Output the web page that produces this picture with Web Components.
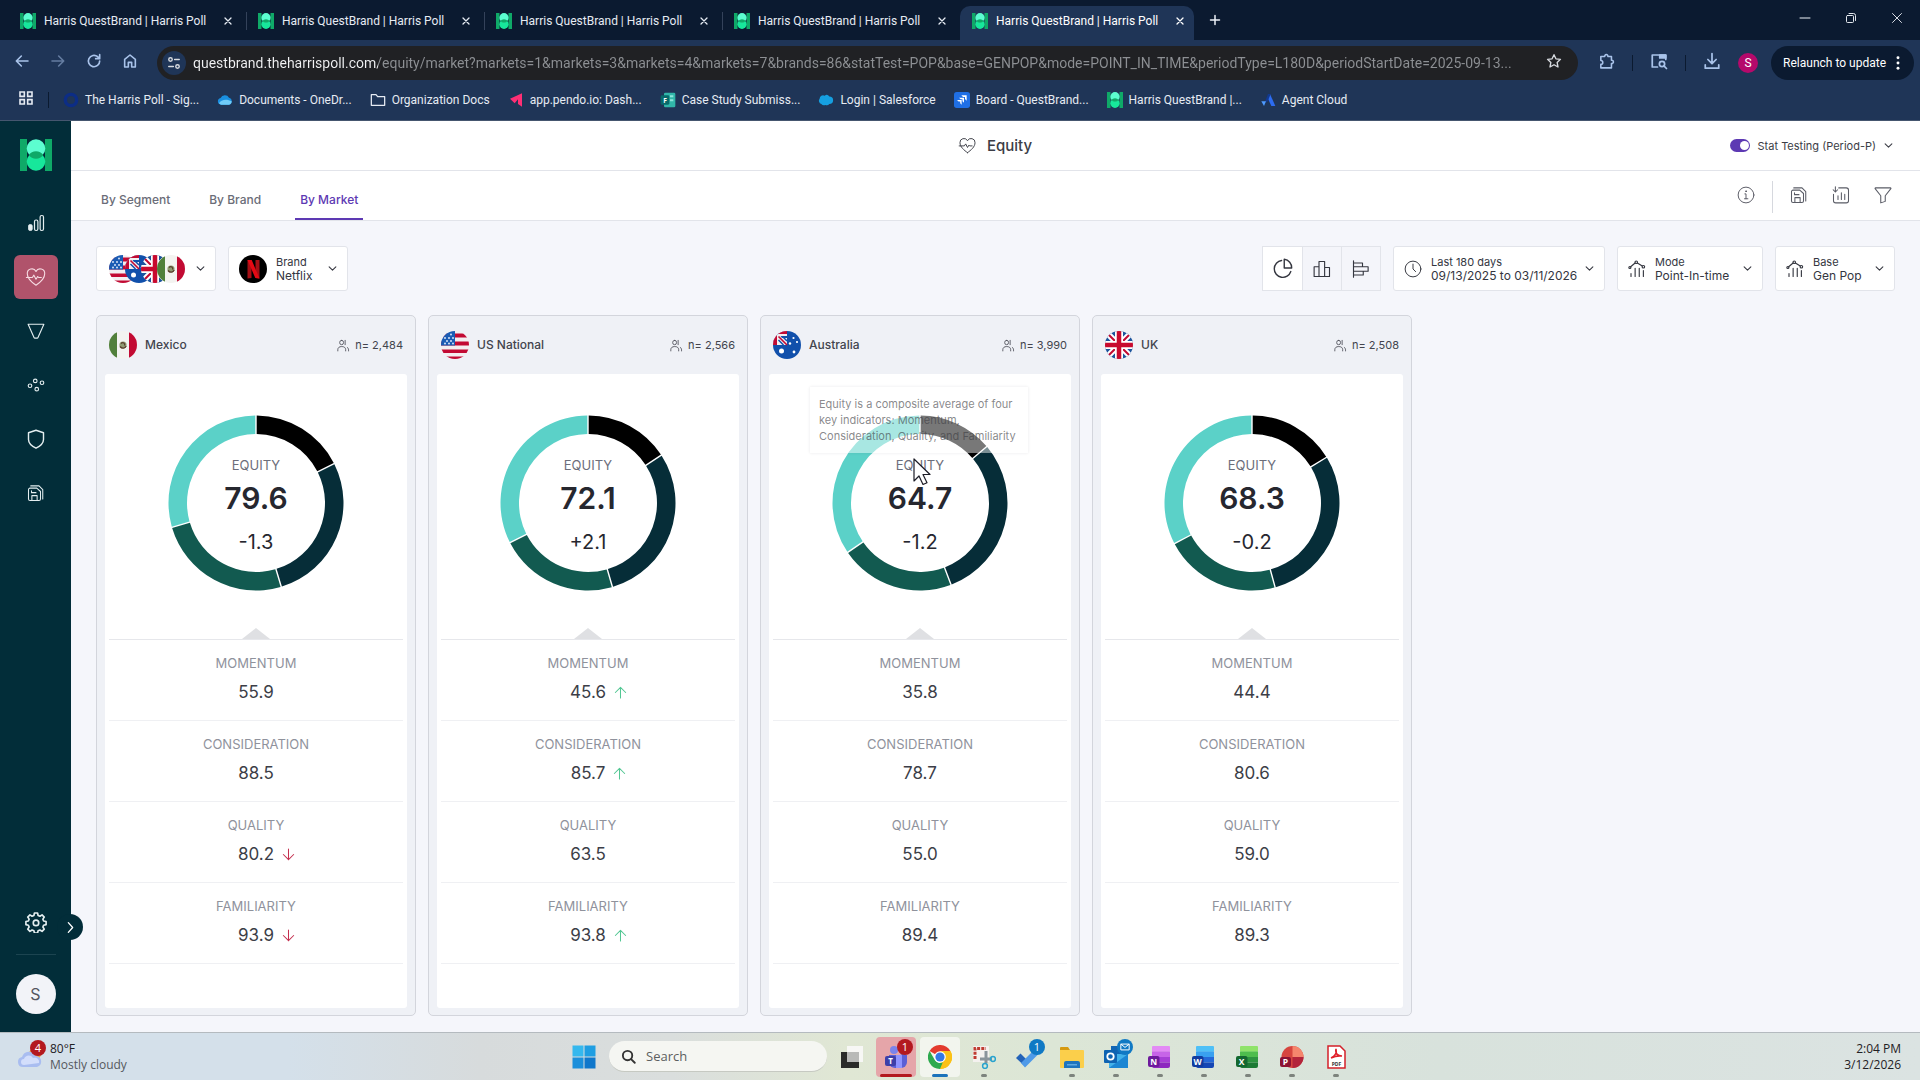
<!DOCTYPE html>
<html lang="en">
<head>
<meta charset="utf-8">
<title>Harris QuestBrand | Harris Poll</title>
<style>
  :root {
    --ui: "Open Sans", "Noto Sans", sans-serif;
    --browser: Roboto, "Noto Sans", sans-serif;
    --app: Inter, "Noto Sans", sans-serif;
    --line: #e2e4ea;
    --ink: #3b3d46;
    --accent: #5d39b3;
    --deep: #022d39;
  }
  html, body { margin: 0; height: 100%; }
  body { font-family: var(--app); }
</style>
</head>
<body>
<desktop-screen></desktop-screen>
<script>
const define = (name, render) => customElements.define(name, class extends HTMLElement {
  connectedCallback() {
    if (this.shadowRoot) return;
    const t = document.createElement('template');
    t.innerHTML = '<style>*,*::before,*::after{box-sizing:border-box}button,input,select{font:inherit;color:inherit;background:none;border:0;margin:0;padding:0;outline:0}a{color:inherit;text-decoration:none}</style>' + render(this);
    this.attachShadow({ mode: 'open' }).append(t.content.cloneNode(true));
  }
});

/* ---------- icons ---------- */
const brandMark = '<path fill="#0fa968" d="M0 0h7v32H0zM25 0h7v32h-7z"/><circle cx="16" cy="22.5" r="9.3" fill="#17e79b"/><circle cx="16" cy="9.5" r="9.3" fill="#5cfdd0"/><path d="M8.6 16a9.3 9.3 0 0 1 14.8 0a9.3 9.3 0 0 1-14.8 0z" fill="#0fa968"/>';
const line = (w, d, extra = '') => `<g fill="none" stroke="currentColor" stroke-width="${w}" stroke-linecap="round" stroke-linejoin="round"><path d="${d}"/>${extra}</g>`;
const heart = 'M12 21C7.500 18 2.500 13.500 2.500 8.500A5 5 0 0 1 12 6A5 5 0 0 1 21.500 8.500C21.500 13.500 16.500 18 12 21z';
const office = (a, b, c, d, letter, tile) => `<rect x="4" y="1" width="18" height="5.700" rx="1" fill="${a}"/><rect x="4" y="6.500" width="18" height="5.600" fill="${b}"/><rect x="4" y="12" width="18" height="5.500" fill="${c}"/><path fill="${d}" d="M4 17.400h18V21a2 2 0 0 1-2 2H6a2 2 0 0 1-2-2z"/><rect x="0" y="11" width="11.500" height="11" rx="2" fill="${tile}"/><text x="5.700" y="19.600" font-family="Open Sans" font-weight="700" font-size="8.500" text-anchor="middle" fill="#fff">${letter}</text>`;
const ICONS = {
  brand: ['0 0 32 32', brandMark],
  close: ['0 0 24 24', line(2.6, 'M6 6l12 12M18 6L6 18')],
  winclose: ['0 0 24 24', line(1.8, 'M3 3l18 18M21 3L3 21')],
  minimize: ['0 0 24 24', line(2, 'M2 12h20')],
  restore: ['0 0 24 24', line(1.9, 'M8 3h9a4 4 0 0 1 4 4v10', '<rect x="3" y="7" width="14" height="14" rx="2"/>')],
  plus: ['0 0 24 24', line(3, 'M12 3v18M3 12h18')],
  back: ['0 0 24 24', line(2.4, 'M21 12H4M11 4.500L3.500 12l7.500 7.500')],
  forward: ['0 0 24 24', line(2.4, 'M3 12h17M13 4.500l7.500 7.500-7.500 7.500')],
  reload: ['0 0 24 24', line(2.5, 'M20.500 12A8.500 8.500 0 1 1 17.500 5.600L20.500 8.500M20.500 2.500v6h-6')],
  home: ['0 0 24 24', line(2.4, 'M4 21V9.500L12 3l8 6.500V21h-5.500v-7h-5v7z')],
  site: ['0 0 24 24', line(2.4, 'M13 6h8M3 18h8', '<circle cx="6" cy="6" r="3"/><circle cx="18" cy="18" r="3"/>')],
  star: ['0 0 24 24', line(2, 'M12 2.500l2.900 6.200 6.800.8-5 4.700 1.300 6.800-6-3.400-6 3.400 1.300-6.800-5-4.700 6.800-.8z')],
  puzzle: ['0 0 24 24', line(2.2, 'M4 5h5.500a2.300 2.300 0 1 1 4.500 0H19v5.300a2.300 2.300 0 1 1 0 4.500V21H4v-5a2.600 2.600 0 0 0 0-5.500z')],
  tabsearch: ['0 0 24 24', line(2.3, 'M10 20H3V4h18v6M18.500 18.500l3.500 3.500', '<circle cx="16" cy="16" r="3.500"/><path d="M13 4h8v4h-8z" fill="currentColor"/>')],
  download: ['0 0 24 24', line(2.3, 'M12 2v13M6.500 10l5.500 5.500 5.500-5.500M3 17v4.500h18V17')],
  dots: ['0 0 24 24', '<g fill="currentColor"><circle cx="12" cy="4" r="2.200"/><circle cx="12" cy="12" r="2.200"/><circle cx="12" cy="20" r="2.200"/></g>'],
  apps: ['0 0 24 24', '<g fill="none" stroke="currentColor" stroke-width="2.400"><path d="M3 3h6.500v6.500H3zM14.500 3H21v6.500h-6.500zM3 14.500h6.500V21H3zM14.500 14.500H21V21h-6.500z"/></g>'],
  ring: ['0 0 24 24', '<circle cx="12" cy="12" r="8.500" fill="none" stroke="#0c2d86" stroke-width="5"/>'],
  cloud: ['0 0 24 24', '<path fill="#1a8fe0" d="M6 19a5 5 0 0 1-.6-9.900A7 7 0 0 1 18 8.500 5.400 5.400 0 0 1 18 19z"/><path fill="#6fcbf7" d="M3 17c3-6 12-7 19-3a5 5 0 0 1-4 5H6a5 5 0 0 1-3-2z"/>'],
  folder: ['0 0 24 24', line(1.9, 'M2 4h7l2.500 3H22v13H2z')],
  pendo: ['0 0 24 24', '<path fill="#ff2f75" d="M3 10L21 2v20l-6-4V11l-5 6z"/>'],
  forms: ['0 0 24 24', '<rect x="6" y="1" width="17" height="22" rx="2" fill="#31b6a9"/><path fill="#8ce5da" d="M15 5h5v3h-5zM15 11h5v3h-5z"/><rect x="1" y="5" width="13" height="14" rx="2" fill="#07696b"/><text x="7.500" y="16" font-family="Open Sans" font-weight="700" font-size="10" text-anchor="middle" fill="#fff">F</text>'],
  salesforce: ['0 0 24 24', '<path fill="#159fe0" d="M5 18a5 5 0 0 1-2.500-8A5 5 0 0 1 10 5.500a5 5 0 0 1 7 1.200A5.600 5.600 0 1 1 17 18a5 5 0 0 1-6 1.500A5 5 0 0 1 5 18z"/>'],
  jira: ['0 0 24 24', '<rect width="24" height="24" rx="4" fill="#1f6fe5"/><path fill="#fff" d="M11 5h8v8l-2.500-2.500V7.500h-3zM7.500 8.500h7.500V16l-2.300-2.300V11H10zM4.500 12h7v7l-2.200-2.300V14.300H6.800z"/>'],
  agent: ['0 0 24 24', '<path fill="#2d6cf0" d="M15 3l8 18h-6l-5-11z"/><path fill="#12398f" d="M12 3h4l-5 12-4 1z"/><path fill="#4f9bff" d="M2 14h7l-3 7z"/>'],
  bars: ['0 0 24 24', '<rect x="2" y="14" width="5" height="8" rx="2" fill="currentColor" stroke="currentColor"/>' + line(1.6, '', '<rect x="10" y="8" width="4.500" height="14" rx="2"/><rect x="17.500" y="2" width="4.500" height="20" rx="2"/>')],
  heart: ['0 0 24 24', line(1.2, heart, '<path d="M1.500 12.500H8l1.700-2.500 2.300 4.500 1.800-3 1 1h3"/>')],
  cone: ['0 0 24 24', line(1.5, 'M1.500 3h21L14.500 21a1 1 0 0 1-1 .5h-3a1 1 0 0 1-1-.5z')],
  nodes: ['0 0 24 24', line(1.5, '', '<circle cx="4" cy="13" r="2.400"/><circle cx="11" cy="6.500" r="2.400"/><circle cx="20" cy="9" r="2.400"/><circle cx="13" cy="17.500" r="2.400"/>')],
  shield: ['0 0 24 24', line(1.7, 'M12 1.500l9 3v8c0 5-4 8-9 10.500-5-2.500-9-5.500-9-10.500v-8z')],
  save: ['0 0 24 24', line(1.4, 'M4 5.500h9l5 4.500V20a2 2 0 0 1-2 2H4a2 2 0 0 1-2-2V7.500a2 2 0 0 1 2-2zM6.500 22v-6.500h7V22M6 9v2.500h6', '<path d="M5 2.500h11l5 5V20"/>')],
  cog: ['0 0 24 24', line(1.8, 'M10.300 2.200h3.400l.6 2.700 2 .8 2.300-1.500 2.400 2.400-1.500 2.300.8 2 2.700.6v3.400l-2.700.6-.8 2 1.500 2.300-2.400 2.400-2.300-1.500-2 .8-.6 2.700h-3.400l-.6-2.700-2-.8-2.300 1.500-2.400-2.400 1.500-2.300-.8-2-2.700-.6v-3.400l2.700-.6.8-2L3 6.600l2.400-2.400 2.300 1.500 2-.8z', '<circle cx="12" cy="13" r="3"/>')],
  right: ['0 0 24 24', line(2.4, 'M8 3l8 9-8 9')],
  chev: ['0 0 24 24', line(2.8, 'M3 7.500l9 9 9-9')],
  info: ['0 0 24 24', line(1.3, 'M10.500 10.500H12V17M10 17h4.500', '<circle cx="12" cy="12" r="10.500"/><circle cx="12" cy="7" r=".6" fill="currentColor"/>')],
  report: ['0 0 24 24', line(1.4, 'M9 2.500h10a3 3 0 0 1 3 3v14a3 3 0 0 1-3 3H5a3 3 0 0 1-3-3V11M4.500 1v7M1.500 5l3 3 3-3M8 18v-5M12.500 18V9M17 18v-7')],
  filter: ['0 0 24 24', line(1.4, 'M2 2.500h20c.5 0 .8.600.5 1L15 13v7.500l-6 2V13L1.500 3.500c-.3-.4 0-1 .5-1z')],
  pie: ['0 0 24 24', line(1.6, 'M11 2.800A9.700 9.700 0 1 0 21.500 15.500M14 1.500V11.500h8.500A9.500 9.500 0 0 0 14 1.500z')],
  columns: ['0 0 24 24', line(1.5, 'M1.500 22V9H8v13zM8 22V2h7.500V22zM15.500 22V10H22v12z')],
  rows: ['0 0 24 24', line(1.5, 'M2 1v22M2 4h12v5H2M2 9h19.500v6H2M2 15h13v5H2')],
  clock: ['0 0 24 24', line(1.3, 'M12 5.500V12l3.500 3.500', '<circle cx="12" cy="12" r="10.500"/>')],
  trend: ['0 0 24 24', line(1.5, 'M3.500 9L9.500 4M12.500 4l6.500 4M4 22v-4M9.500 22V11M15 22V11M20.500 22v-8', '<circle cx="2.500" cy="10" r="1.400"/><circle cx="11" cy="3" r="1.700"/><circle cx="20.500" cy="9" r="1.700"/>')],
  people: ['0 0 24 24', line(1.5, 'M1.500 22v-2.500c0-3.500 3-5.500 6.500-5.500h1.500c3.500 0 6.500 2 6.500 5.500V22M15 2.500v8M19 15.500c1.500 1 2.300 2.500 2.300 5V22', '<rect x="5" y="2.500" width="7" height="8" rx="3.500"/>')],
  up: ['0 0 24 24', line(1.9, 'M12 22V2.500M2.500 12L12 2.500l9.500 9.500')],
  down: ['0 0 24 24', line(1.9, 'M12 2v19.500M2.500 12l9.500 9.500 9.500-9.500')],
  netflix: ['0 0 28 28', '<rect width="28" height="28" fill="#000"/><path fill="#a50f15" d="M8.500 5h4v18l-4 .6zM16.500 5h4v18.500l-4-.6z"/><path fill="#e50914" d="M8.500 5h4.200l7.800 18.500-4.200-.6z"/>'],
  weather: ['0 0 26 26', '<circle cx="18" cy="10" r="6" fill="#f0a23c"/><path fill="#a9bdf0" d="M6 23a5 5 0 0 1-1-9.900A7.500 7.500 0 0 1 19 12a5.600 5.600 0 0 1 1 11z"/><path fill="#d3defb" d="M7 21a3 3 0 0 1 0-6c1-4 7-5 9-1 3-1 7 1 6 5z"/>'],
  windows: ['0 0 24 24', '<path fill="#35b8ee" d="M.5.500h11v11H.5z"/><path fill="#1f9ee2" d="M12.500.500h11v11h-11z"/><path fill="#1b8fdb" d="M.5 12.500h11v11H.5z"/><path fill="#0f77cb" d="M12.500 12.500h11v11h-11z"/>'],
  search: ['0 0 24 24', line(3, 'M16.500 16.500L22 22', '<circle cx="10.500" cy="10.500" r="7.500"/>')],
  taskview: ['0 0 24 24', '<path fill="#2a2b29" d="M1 7h18v16H1z"/><path fill="#f7f7f5" d="M7 1h16v16H7z"/><path fill="#b9bab8" d="M7 7h12v10H7z"/>'],
  teams: ['0 0 24 24', '<circle cx="10" cy="5" r="4" fill="#7b83eb"/><circle cx="19" cy="7" r="3" fill="#5059c9"/><path fill="#5b5fd6" d="M5 10h18v7a6 6 0 0 1-6 6h-6a6 6 0 0 1-6-6z"/><path fill="#8f94ff" d="M12 10h6v13h-6z"/><rect x="1" y="11" width="11" height="10" rx="2" fill="#3d3fa8"/><text x="6.500" y="19" font-family="Open Sans" font-weight="700" font-size="8" text-anchor="middle" fill="#fff">T</text>'],
  chrome: ['0 0 24 24', '<path fill="#e33b2e" d="M12 12L1.600 6a12 12 0 0 1 20.800 0z"/><path fill="#fbc116" d="M12 12l10.400-6A12 12 0 0 1 12 24z"/><path fill="#fbc116" d="M12 6h10.400A12 12 0 0 1 12 24l5.200-9z"/><path fill="#2da94f" d="M1.600 6l5.200 9a6 6 0 0 0 8 2.300L12 24A12 12 0 0 1 1.600 6z"/><circle cx="12" cy="12" r="5.800" fill="#fff"/><circle cx="12" cy="12" r="4.600" fill="#3478e5"/>'],
  snip: ['0 0 24 24', '<path fill="#f4f1ef" d="M1 1h16v16H1z"/><path fill="none" stroke="#bf3b31" stroke-width="3" stroke-dasharray="3 1.200" d="M3 14V3.500h11"/><path fill="none" stroke="#8a949b" stroke-width="3" d="M14 6v12M8 14h12"/><circle cx="21" cy="14" r="2.400" fill="none" stroke="#28a3cf" stroke-width="1.500"/><circle cx="13" cy="21" r="2.400" fill="none" stroke="#28a3cf" stroke-width="1.500"/>'],
  todo: ['0 0 24 24', '<path fill="#2363b8" d="M0 13l4.500-4.500L13 17l-4 4.500z"/><path fill="#4f9ae8" d="M9 22.500l-4-4.500L19 4l4.500 4z"/>'],
  explorer: ['0 0 24 24', '<path fill="#d69a10" d="M0 3a1 1 0 0 1 1-1h7l2 3H0z"/><path fill="#fbcf4b" d="M0 5h23a1 1 0 0 1 1 1v16a1 1 0 0 1-1 1H1a1 1 0 0 1-1-1z"/><path fill="#1f74bd" d="M4 23v-5a2 2 0 0 1 2-2h12a2 2 0 0 1 2 2v5z"/><path fill="#5fa9e0" d="M7 19h10v1.500H7z"/>'],
  outlook: ['0 0 24 24', '<path fill="#1266b5" d="M7 1h15v11H7z"/><path fill="#41b1ea" d="M5 9h19v14H5z"/><path fill="#1b86d3" d="M5 23L24 9v14z"/><rect y="5" width="13" height="13" rx="1" fill="#0e63b2"/><circle cx="6.500" cy="11.500" r="3.200" fill="none" stroke="#fff" stroke-width="1.800"/>'],
  onenote: ['0 0 24 24', office('#e38bf5', '#c764e8', '#a73fd6', '#8d28bf', 'N', '#6d1a9c')],
  word: ['0 0 24 24', office('#4fc0f7', '#39a0f0', '#2568d8', '#1546b4', 'W', '#123b9e')],
  excel: ['0 0 24 24', office('#8fe36a', '#4ebd4d', '#2d9440', '#1d7a35', 'X', '#13672f')],
  ppt: ['0 0 24 24', '<circle cx="12.500" cy="12" r="11" fill="#d6453f"/><path fill="#f5866d" d="M12.500 1a11 11 0 0 1 11 11h-11z"/><path fill="#b3243b" d="M23.500 12a11 11 0 0 1-11 11V12z"/><rect x="0" y="12" width="11" height="10" rx="2" fill="#8c1233"/><text x="5.500" y="19.800" font-family="Open Sans" font-weight="700" font-size="8.500" text-anchor="middle" fill="#fff">P</text>'],
  pdf: ['0 0 24 24', '<path fill="#fff" stroke="#d3202a" stroke-width="1.500" d="M4 1h12l5 5v17H4z"/><path fill="none" stroke="#e0202a" stroke-width="1.600" d="M7 13c4-2 6-5 5-9-1 5 2 7 6 7-4-.5-8 .5-11 2z"/><text x="12.500" y="20.500" font-family="Open Sans" font-weight="700" font-size="5" text-anchor="middle" fill="#333">PDF</text>'],
  mail: ['0 0 24 24', '<path fill="none" stroke="#fff" stroke-width="2.400" d="M2 5h20v14H2zM2 5l10 8L22 5"/>'],
  pointer: ['0 0 18 28', '<path fill="#fff" stroke="#1c1c26" stroke-width="1.200" stroke-linejoin="round" d="M1 1v22l5-5 4 8.500 4-1.800-4-8.200h7z"/>'],
  flagMX: ['0 0 28 28', '<rect width="28" height="28" fill="#f3f3f0"/><path fill="#51803b" d="M0 0h8v28H0z"/><path fill="#c20a33" d="M20 0h8v28h-8z"/><circle cx="14" cy="14" r="3.600" fill="#8f9a72"/><path fill="none" stroke="#5b3f2d" stroke-width="1.300" d="M12 12.500c2-2 4.500 0 3.500 2M11 15.500c2 2.500 5 2 6.200-.5"/>'],
  flagUS: ['0 0 28 28', '<rect width="28" height="28" fill="#f3eef0"/><path fill="#c20a33" d="M0 2.500h28v4H0zM0 10.500h28v4H0zM0 18.500h28v3.500H0zM0 25.500h28V28H0z"/><path fill="#1b5cb4" d="M0 0h14v14.500H0z"/><g fill="#d4e2f7"><circle cx="4" cy="7" r="1"/><circle cx="8" cy="7" r="1"/><circle cx="12" cy="7" r="1"/><circle cx="6" cy="10" r="1"/><circle cx="10" cy="10" r="1"/><circle cx="4" cy="12.500" r="1"/><circle cx="8" cy="12.500" r="1"/><circle cx="12" cy="12.500" r="1"/><circle cx="10" cy="3.500" r="1"/></g>'],
  flagAU: ['0 0 28 28', '<rect width="28" height="28" fill="#1150ab"/><path fill="#f3eef0" d="M0 0h14v14H0z"/><path fill="#c20a33" d="M0 0h14v3H4v11H0z"/><path fill="#1150ab" d="M7.500 5H14v2H9z"/><path d="M5.500 5.500L14 14" stroke="#c20a33" stroke-width="1.600"/><path d="M10 6l4 4M5.500 9l5 5" stroke="#1150ab" stroke-width="1.500"/><g fill="#fff"><circle cx="8.500" cy="20" r="2.500"/><circle cx="20.500" cy="7" r="1.100"/><circle cx="17" cy="12.500" r="1.200"/><circle cx="24" cy="11" r="1.100"/><circle cx="21" cy="21" r="1.400"/></g>'],
  flagUK: ['0 0 28 28', '<rect width="28" height="28" fill="#1d559c"/><path d="M0 0l28 28M28 0L0 28" stroke="#fff" stroke-width="6"/><path d="M0 0l28 28M28 0L0 28" stroke="#c20a33" stroke-width="2"/><path d="M14 0v28M0 14h28" stroke="#fff" stroke-width="8"/><path d="M14 0v28M0 14h28" stroke="#c80a2e" stroke-width="4.500"/>'],
};
define('ui-icon', el => {
  const [box, body] = ICONS[el.getAttribute('name')];
  const w = el.getAttribute('size') || 16, h = el.getAttribute('tall') || w;
  return `<style>:host{display:inline-flex;flex:none}svg{display:block;${el.hasAttribute('round') ? 'border-radius:50%' : ''}}</style><svg width="${w}" height="${h}" viewBox="${box}" preserveAspectRatio="none" aria-hidden="true">${body}</svg>`;
});

/* ---------- browser window ---------- */
define('browser-tab', el => `<style>
  :host{display:flex;align-items:center;width:238px;height:34px;padding:0 0 4px 20px;position:relative;color:#e6ebf3}
  :host([active]){background:#1f3557;border-radius:10px 10px 0 0;padding-left:12px;width:234px;margin-left:8px;color:#fff}
  :host([rule])::after{content:"";position:absolute;right:-9px;top:6px;width:1px;height:18px;background:#34425a}
  .t{flex:none;width:188px;text-align:left;display:flex;align-items:center;gap:8px;white-space:nowrap;overflow:hidden}
  .x{margin-left:10px;width:20px;height:20px;display:grid;place-items:center}
</style><button class="t"><ui-icon name="brand" size="16"></ui-icon><slot></slot></button><button class="x" aria-label="Close tab"><ui-icon name="close" size="12"></ui-icon></button>`);

define('browser-chrome', () => `<style>
  :host{display:block;flex:none;font:12px/16px var(--browser);color:#eef2f8}
  .strip{display:flex;align-items:flex-end;height:40px;background:#0b1a30}
  .new{margin:0 auto 7px 12px;width:18px;height:26px;display:grid;place-items:center}
  .win{display:flex;height:40px;align-items:center;padding:0 17px 0 0;gap:34px}
  .bar{display:flex;align-items:center;height:40px;background:#1f3557;color:#a9c3ea;padding:6px 6px 0 14px}
  .nav{display:flex;gap:20px;width:143px;flex:none}.dim{opacity:.5}
  .url{flex:1;min-width:0;display:flex;align-items:center;height:34px;border-radius:17px;background:#202124;padding:0 16px 0 5px;color:#d8dbe0}
  .site{width:24px;height:24px;border-radius:50%;background:#1f3557;display:grid;place-items:center;flex:none}
  .url input{flex:1;min-width:0;margin:0 12px 0 7px;font-size:14px;line-height:20px;color:#8d9094;-webkit-text-fill-color:transparent;background:linear-gradient(90deg,#f2f3f5 185px,#8d9094 185px);-webkit-background-clip:text;background-clip:text}
  .tools{display:flex;align-items:center;gap:17px;padding:0 13px 0 20px}
  .tools i{width:1px;height:16px;background:#0b1a30}
  .me{width:20px;height:20px;border-radius:50%;background:#b5096b;color:#fff;display:grid;place-items:center}
  .re{height:34px;border-radius:17px;background:#0b1a30;color:#fff;padding:0 8px 0 12px;display:flex;align-items:center;gap:4px;white-space:nowrap}
  .marks{display:flex;align-items:center;height:40px;background:#1f3557;padding:0 16px 0 18px;color:#e6ebf3}
  .marks>i{width:1px;height:16px;background:#0b1a30;margin:0 14px}
  nav{display:flex;gap:18px}
  nav a{display:flex;align-items:center;gap:6px;white-space:nowrap}
  .edge{height:1px;background:#45566f}
</style>
<div class="strip">
 <browser-tab rule>Harris QuestBrand | Harris Poll</browser-tab><browser-tab rule>Harris QuestBrand | Harris Poll</browser-tab><browser-tab rule>Harris QuestBrand | Harris Poll</browser-tab><browser-tab>Harris QuestBrand | Harris Poll</browser-tab><browser-tab active>Harris QuestBrand | Harris Poll</browser-tab>
 <button class="new" aria-label="New tab"><ui-icon name="plus" size="12"></ui-icon></button>
 <div class="win"><button aria-label="Minimize"><ui-icon name="minimize" size="12"></ui-icon></button><button aria-label="Restore"><ui-icon name="restore" size="12"></ui-icon></button><button aria-label="Close"><ui-icon name="winclose" size="12"></ui-icon></button></div>
</div>
<div class="bar">
 <div class="nav"><button aria-label="Back"><ui-icon name="back"></ui-icon></button><button class="dim" aria-label="Forward"><ui-icon name="forward"></ui-icon></button><button aria-label="Reload"><ui-icon name="reload"></ui-icon></button><button aria-label="Home"><ui-icon name="home"></ui-icon></button></div>
 <div class="url"><button class="site" aria-label="Site information"><ui-icon name="site" size="14"></ui-icon></button><input aria-label="Address" value="questbrand.theharrispoll.com/equity/market?markets=1&amp;markets=3&amp;markets=4&amp;markets=7&amp;brands=86&amp;statTest=POP&amp;base=GENPOP&amp;mode=POINT_IN_TIME&amp;periodType=L180D&amp;periodStartDate=2025-09-13..."><button aria-label="Bookmark"><ui-icon name="star"></ui-icon></button></div>
 <div class="tools"><button aria-label="Extensions"><ui-icon name="puzzle" size="17"></ui-icon></button><i></i><button aria-label="Search tabs"><ui-icon name="tabsearch" size="18"></ui-icon></button><i></i><button aria-label="Downloads"><ui-icon name="download" size="18"></ui-icon></button><button class="me">S</button></div>
 <button class="re">Relaunch to update<ui-icon name="dots" size="16"></ui-icon></button>
</div>
<div class="marks"><button aria-label="Apps"><ui-icon name="apps"></ui-icon></button><i></i><nav>${
 [['ring','The Harris Poll - Sig...'],['cloud','Documents - OneDr...'],['folder','Organization Docs'],['pendo','app.pendo.io: Dash...'],['forms','Case Study Submiss...'],['salesforce','Login | Salesforce'],['jira','Board - QuestBrand...'],['brand','Harris QuestBrand |...'],['agent','Agent Cloud']].map(([i,t]) => `<a href="#"><ui-icon name="${i}"></ui-icon>${t}</a>`).join('')}</nav></div>
<div class="edge"></div>`);

/* ---------- application ---------- */
define('side-bar', () => `<style>
  :host{display:flex;flex-direction:column;align-items:center;flex:none;width:71px;background:var(--deep);color:#e4eef0;padding:18px 0;position:relative}
  nav{display:flex;flex-direction:column;gap:10px;margin-top:30px}
  a{width:44px;height:44px;border-radius:6px;display:grid;place-items:center}
  a.on{background:#b0536b;color:#f6dbe2}
  .set{margin-top:auto}
  hr{width:40px;height:1px;border:0;background:#1c4450;margin:10px 0 19px}
  .me{width:40px;height:40px;border-radius:50%;background:#f2f3f8;color:#55565e;font:16px/40px var(--app)}
  .open{position:absolute;right:-12px;bottom:92px;width:26px;height:26px;border-radius:50%;background:var(--deep);display:grid;place-items:center;z-index:2;color:#fff}
</style>
<ui-icon name="brand" size="32"></ui-icon>
<nav aria-label="Main">${[['bars','Overview',18],['heart','Equity',22],['cone','Funnel',18],['nodes','Attributes',18],['shield','Shield',20],['save','Saved',18]].map(([i,l,s]) => `<a href="#" aria-label="${l}" class="${i==='heart'?'on':''}"><ui-icon name="${i}" size="${s}"></ui-icon></a>`).join('')}</nav>
<a class="set" href="#" aria-label="Settings"><ui-icon name="cog" size="22"></ui-icon></a><hr><button class="me">S</button>
<button class="open" aria-label="Expand menu"><ui-icon name="right" size="13"></ui-icon></button>`);

define('page-header', () => `<style>
  :host{display:block;background:#fff;color:var(--ink)}
  .top{display:grid;grid-template-columns:1fr auto 1fr;align-items:center;height:50px;border-bottom:1px solid var(--line);padding:0 27px 0 26px}
  h1{display:flex;align-items:center;gap:10px;margin:0;font:500 15px/20px var(--app)}
  .stat{justify-self:end;display:flex;align-items:center;gap:8px;font-size:11px;line-height:16px;white-space:nowrap}
  .stat input{appearance:none;width:20px;height:13px;border-radius:7px;background:var(--accent);position:relative}
  .stat input::after{content:"";position:absolute;right:1px;top:2px;width:9px;height:9px;border-radius:50%;background:#fff}
  .stat label,.stat button{display:flex;align-items:center;gap:8px}
  .sub{display:flex;justify-content:space-between;height:50px;border-bottom:1px solid var(--line);padding:0 28px 0 25px}
  nav{display:flex;gap:29px}
  nav a{padding:20px 5px 0;font-size:12px;line-height:18px;font-weight:500;color:#6b6d78;white-space:nowrap}
  nav a.on{color:var(--accent);border-bottom:2px solid var(--accent)}
  .acts{display:flex;align-items:center;gap:24px;color:#5a5c66;padding-top:2px}
  .acts i{width:1px;height:32px;background:#d6d8de;margin:0 -7px}
</style>
<div class="top"><span></span><h1><ui-icon name="heart" size="19"></ui-icon>Equity</h1>
<div class="stat"><label><input type="checkbox" checked>Stat Testing (Period-P)</label><button aria-label="Stat testing options"><ui-icon name="chev" size="9"></ui-icon></button></div></div>
<div class="sub"><nav><a href="#">By Segment</a><a href="#">By Brand</a><a href="#" class="on">By Market</a></nav>
<div class="acts"><button aria-label="Information"><ui-icon name="info" size="18"></ui-icon></button><i></i><button aria-label="Save"><ui-icon name="save" size="18"></ui-icon></button><button aria-label="Export"><ui-icon name="report" size="18"></ui-icon></button><button aria-label="Filter"><ui-icon name="filter" size="18"></ui-icon></button></div></div>`);

define('pick-list', el => `<style>
  :host{display:block;color:#34363f}
  label{display:flex;align-items:center;justify-content:space-between;height:45px;padding:0 10px;background:#fff;border:1px solid var(--line);border-radius:3px;font-size:12px;line-height:14px}
  .c{display:flex;flex-direction:column;margin:0 auto 0 9px}
  .k{font-size:11px}
  select{appearance:none;height:14px;line-height:14px;white-space:nowrap}
</style><label><ui-icon name="${el.getAttribute('icon')}" size="${el.getAttribute('size') || 18}" ${el.hasAttribute('round') ? 'round' : ''}></ui-icon><span class="c"><span class="k">${el.getAttribute('label')}</span><select><option>${el.getAttribute('value')}</option></select></span><ui-icon name="chev" size="9"></ui-icon></label>`);

define('filter-bar', () => `<style>
  :host{display:flex;gap:12px;align-items:flex-start;color:#34363f}
  .mk{display:flex;align-items:center;justify-content:space-between;width:120px;height:45px;padding:0 10px 0 12px;background:#fff;border:1px solid var(--line);border-radius:3px}
  .fl{display:flex}.fl ui-icon+ui-icon{margin-left:-12px}
  .view{display:flex;margin-left:auto;border:1px solid var(--line)}
  .view button{width:39px;height:43px;display:grid;place-items:center;border-left:1px solid var(--line);background:#f4f5fa}
  .view button:first-child{background:#fff;border-left:0}
  .br{width:120px}.dt{width:212px}.mo{width:146px}.ba{width:120px}
</style>
<button class="mk" aria-label="Markets"><span class="fl"><ui-icon name="flagUS" size="28" round></ui-icon><ui-icon name="flagAU" size="28" round></ui-icon><ui-icon name="flagUK" size="28" round></ui-icon><ui-icon name="flagMX" size="28" round></ui-icon></span><ui-icon name="chev" size="9"></ui-icon></button>
<pick-list class="br" icon="netflix" size="28" round label="Brand" value="Netflix"></pick-list>
<div class="view"><button aria-label="Donut view"><ui-icon name="pie" size="21"></ui-icon></button><button aria-label="Column view"><ui-icon name="columns" size="18"></ui-icon></button><button aria-label="Row view"><ui-icon name="rows" size="18"></ui-icon></button></div>
<pick-list class="dt" icon="clock" label="Last 180 days" value="09/13/2025 to 03/11/2026"></pick-list>
<pick-list class="mo" icon="trend" label="Mode" value="Point-In-time"></pick-list>
<pick-list class="ba" icon="trend" label="Base" value="Gen Pop"></pick-list>`);

define('equity-donut', el => {
  const vals = el.getAttribute('values').split(',').map(Number);
  const sum = vals.reduce((a, b) => a + b), cols = ['#000', '#062d38', '#125a50', '#5bd1c8'];
  const at = (r, a) => `${(88 + r * Math.sin(a)).toFixed(2)} ${(88 - r * Math.cos(a)).toFixed(2)}`;
  let a = 0;
  const arcs = vals.map((v, i) => {
    const b = a + v / sum * 2 * Math.PI, go = .008, gi = .010;
    const d = `M${at(87.5, a + go)}A87.500 87.500 0 0 1 ${at(87.5, b - go)}L${at(69, b - gi)}A69 69 0 0 0 ${at(69, a + gi)}z`;
    a = b;
    return `<path fill="${cols[i]}" d="${d}"/>`;
  }).join('');
  return `<style>
  :host{display:grid;width:176px;height:176px}
  svg,div{grid-area:1/1}
  div{display:flex;flex-direction:column;align-items:center;padding-top:41px;color:#26272f}
  .k{font-size:13px;line-height:18px;color:#6c6e7b}
  .v{font-size:30px;line-height:40px;font-weight:600;margin-top:4px}
  .d{font-size:20px;line-height:28px;margin-top:10px}
</style><svg width="176" height="176" aria-hidden="true">${arcs}</svg><div><span class="k">EQUITY</span><span class="v">${el.getAttribute('score')}</span><span class="d">${el.getAttribute('delta')}</span></div>`;
});

define('metric-row', el => {
  const t = el.getAttribute('trend');
  return `<style>
  :host{display:block;height:81px;padding-top:15px;margin:0 4px;border-bottom:1px solid #eff0f3;text-align:center}
  .k{font-size:13px;line-height:16px;color:#8f929c}
  .r{display:grid;grid-template-columns:1fr auto 1fr;align-items:center;gap:8px;margin-top:10px;font-size:17px;line-height:22px;color:#3c3e47}
  ui-icon{color:${t === 'up' ? '#52c793' : '#c4304f'}}
</style><div class="k">${el.getAttribute('label')}</div><div class="r"><span></span><span>${el.getAttribute('value')}</span>${t ? `<ui-icon name="${t}" size="13"></ui-icon>` : '<span></span>'}</div>`;
});

define('market-card', el => {
  const g = n => el.getAttribute(n), vals = g('values').split(','), tr = (g('trends') || ',,,').split(',');
  return `<style>
  :host{display:flex;flex-direction:column;flex:0 1 320px;border:1px solid #d3d5dc;border-radius:5px;background:#eff1f6;padding:0 8px 7px}
  header{display:flex;align-items:center;height:58px;padding:0 4px;color:#42444d;white-space:nowrap}
  h2{margin:0 auto 0 8px;font:500 12px/20px var(--app)}
  .n{margin-left:5px;font-size:11px;line-height:16px}
  .body{flex:1;background:#fff;border-radius:3px;position:relative}
  .hero{height:266px;padding-top:41px;display:flex;flex-direction:column;align-items:center;justify-content:space-between;border-bottom:1px solid #e6e7eb;margin:0 4px}
  .tri{width:28px;height:11px;background:#dfe0e3;clip-path:polygon(50% 0,100% 100%,0 100%)}
</style><header><ui-icon name="${g('flag')}" size="28" round></ui-icon><h2>${g('name')}</h2><ui-icon name="people" size="13"></ui-icon><span class="n">n= ${g('count')}</span></header>
<div class="body"><div class="hero"><equity-donut score="${g('score')}" delta="${g('delta')}" values="${g('values')}"></equity-donut><span class="tri"></span></div>
${['MOMENTUM','CONSIDERATION','QUALITY','FAMILIARITY'].map((l, i) => `<metric-row label="${l}" value="${vals[i]}" trend="${tr[i]}"></metric-row>`).join('')}<slot></slot></div>`;
});

define('hint-bubble', () => `<style>
  :host{position:absolute;left:41px;top:13px;width:218px;padding:9px 9px;background:rgba(255,255,255,.47);box-shadow:0 0 3px rgba(40,40,60,.1);font-size:11px;line-height:16px;color:rgba(60,60,66,.62);white-space:nowrap}
</style><slot></slot>`);
define('mouse-pointer', () => `<style>:host{position:absolute;left:144px;top:84px}</style><ui-icon name="pointer" size="18" tall="28"></ui-icon>`);

define('equity-app', () => `<style>
  :host{display:flex;flex:1;min-height:0}
  main{flex:1;min-width:0;display:flex;flex-direction:column;background:#f5f6fb}
  filter-bar{padding:25px 25px 0}
  .cards{flex:1;display:flex;gap:12px;padding:24px 25px 16px}
</style><side-bar></side-bar><main><page-header></page-header><filter-bar></filter-bar><section class="cards">
<market-card name="Mexico" flag="flagMX" count="2,484" score="79.6" delta="-1.3" values="55.9,88.5,80.2,93.9" trends=",,down,down"></market-card>
<market-card name="US National" flag="flagUS" count="2,566" score="72.1" delta="+2.1" values="45.6,85.7,63.5,93.8" trends="up,up,,up"></market-card>
<market-card name="Australia" flag="flagAU" count="3,990" score="64.7" delta="-1.2" values="35.8,78.7,55.0,89.4"><hint-bubble>Equity is a composite average of four<br>key indicators: Momentum,<br>Consideration, Quality, and Familiarity</hint-bubble><mouse-pointer></mouse-pointer></market-card>
<market-card name="UK" flag="flagUK" count="2,508" score="68.3" delta="-0.2" values="44.4,80.6,59.0,89.3"></market-card>
</section></main>`);

/* ---------- taskbar ---------- */
define('task-icon', el => {
  const b = el.getAttribute('badge');
  return `<style>
  :host{display:block;position:relative;width:40px;height:40px}
  :host([alert]){background:#e5a5a9;border-radius:4px}
  :host([front]){background:rgba(255,255,255,.6);border-radius:4px}
  button{width:40px;height:40px;display:grid;place-items:center}
  .b{position:absolute;right:3px;top:2px;width:16px;height:16px;border-radius:50%;background:${el.hasAttribute('alert') ? '#b3191f' : '#1079c4'};color:#fff;font-size:11px;line-height:16px;text-align:center;display:grid;place-items:center}
  .u{position:absolute;bottom:0;left:50%;transform:translateX(-50%);height:3px;border-radius:2px;width:6px;background:#7d837d}
  :host([alert]) .u{width:32px;background:#b3191f}
  :host([front]) .u{width:16px;background:#1b73bb}
  :host([idle]) .u{display:none}
</style><button aria-label="${el.getAttribute('name')}"><ui-icon name="${el.getAttribute('name')}" size="24"></ui-icon></button>${b ? `<span class="b">${b === 'mail' ? '<ui-icon name="mail" size="10"></ui-icon>' : b}</span>` : ''}<span class="u"></span>`;
});
define('task-bar', () => `<style>
  :host{display:grid;grid-template-columns:1fr auto 1fr;align-items:center;flex:none;height:48px;border-top:1px solid #b4babf;background:linear-gradient(90deg,#d4e0ea 0,#d4e0ea 15%,#d7dbdc 25%,#dadedd 35%,#e0e7d4 44%,#dce6d6 55%,#d8e2dc 75%,#dbe3e2 100%);font:12px/16px var(--ui);color:#1f2124}
  .w{display:flex;align-items:center;gap:7px;padding-left:17px;text-align:left;position:relative}
  .w b{position:absolute;left:30px;top:-1px;width:16px;height:16px;border-radius:50%;background:#b3191f;color:#fff;font-weight:400;text-align:center;font-size:11px}
  .w small,.c{display:block;font-size:12px}.w small{color:#55595e}
  .mid{display:flex;align-items:center;gap:4px;padding-left:8px}
  .start{display:grid;margin-right:9px}
  label{display:flex;align-items:center;gap:10px;width:218px;height:31px;border-radius:16px;background:#f5f6f2;border-bottom:1px solid #c6c9c2;padding:0 12px;margin-right:1px;color:#333}
  label input{width:100%;font-size:13px}label input::placeholder{color:#5c5f60;opacity:1}
  .c{text-align:right;padding-right:19px}
</style>
<button class="w"><ui-icon name="weather" size="26"></ui-icon><b>4</b><span>80°F<small>Mostly cloudy</small></span></button>
<div class="mid"><button class="start" aria-label="Start"><ui-icon name="windows" size="24"></ui-icon></button><label><ui-icon name="search" size="15"></ui-icon><input aria-label="Search" placeholder="Search"></label>
<task-icon name="taskview" idle></task-icon><task-icon name="teams" alert badge="1"></task-icon><task-icon name="chrome" front></task-icon><task-icon name="snip"></task-icon><task-icon name="todo" idle badge="1"></task-icon><task-icon name="explorer"></task-icon><task-icon name="outlook" badge="mail"></task-icon><task-icon name="onenote"></task-icon><task-icon name="word"></task-icon><task-icon name="excel"></task-icon><task-icon name="ppt"></task-icon><task-icon name="pdf"></task-icon></div>
<div class="c">2:04 PM<br>3/12/2026</div>`);

define('desktop-screen', () => `<style>:host{display:flex;flex-direction:column;min-height:100vh}</style><browser-chrome></browser-chrome><equity-app></equity-app><task-bar></task-bar>`);
</script>
</body>
</html>
